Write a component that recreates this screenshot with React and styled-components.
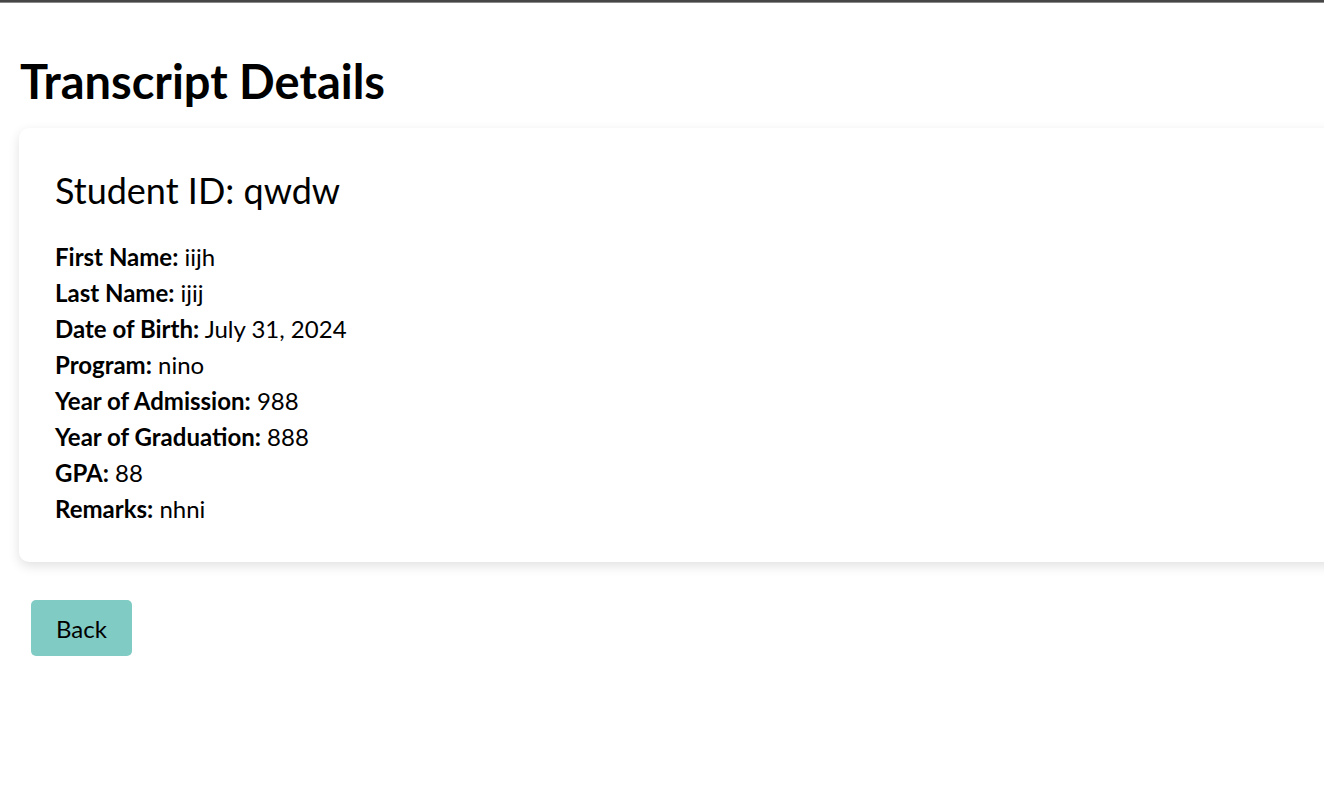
import React from 'react'
import styled, { createGlobalStyle } from 'styled-components'

const GlobalStyle = createGlobalStyle`
  body {
    margin: 0;
    background: #fff;
    color: #000;
    font-family: Lato, "Open Sans", sans-serif;
    overflow-x: hidden;
  }
`

const TopBar = styled.div`
  height: 3px;
  background: #464646;
  border-bottom: 1px solid #8a8a8a;
  box-sizing: border-box;
`

const Page = styled.div`
  padding: 0 0 0 19px;
  overflow: hidden;
  min-height: 782px;
`

const Title = styled.h1`
  margin: 50px 0 19px 1px;
  font-size: 47px;
  line-height: 56px;
  font-weight: 700;
`

const Card = styled.div`
  width: calc(100% + 40px);
  box-sizing: border-box;
  padding: 36px 36px 35px;
  background: #fff;
  border-radius: 10px;
  box-shadow: 0 4px 12px rgba(0, 0, 0, 0.12);
`

const StudentId = styled.h2`
  margin: 6px 0 29px;
  font-size: 36px;
  line-height: 40px;
  font-weight: 400;
`

const Field = styled.p`
  margin: 0;
  font-size: 24px;
  line-height: 36px;
`

const Label = styled.strong`
  font-weight: 700;
`

const BackButton = styled.button`
  margin: 38px 0 0 12px;
  height: 56px;
  padding: 0 25px;
  border: none;
  border-radius: 5px;
  background: #80cbc4;
  color: #000;
  font-family: inherit;
  font-size: 24px;
  cursor: pointer;
`

const fields = [
  ['First Name', 'iijh'],
  ['Last Name', 'ijij'],
  ['Date of Birth', 'July 31, 2024'],
  ['Program', 'nino'],
  ['Year of Admission', '988'],
  ['Year of Graduation', '888'],
  ['GPA', '88'],
  ['Remarks', 'nhni'],
]

export default function App() {
  return (
    <>
      <GlobalStyle />
      <TopBar />
      <Page>
        <Title>Transcript Details</Title>
        <Card>
          <StudentId>Student ID: qwdw</StudentId>
          {fields.map(([label, value]) => (
            <Field key={label}>
              <Label>{label}:</Label> {value}
            </Field>
          ))}
        </Card>
        <BackButton>Back</BackButton>
      </Page>
    </>
  )
}
